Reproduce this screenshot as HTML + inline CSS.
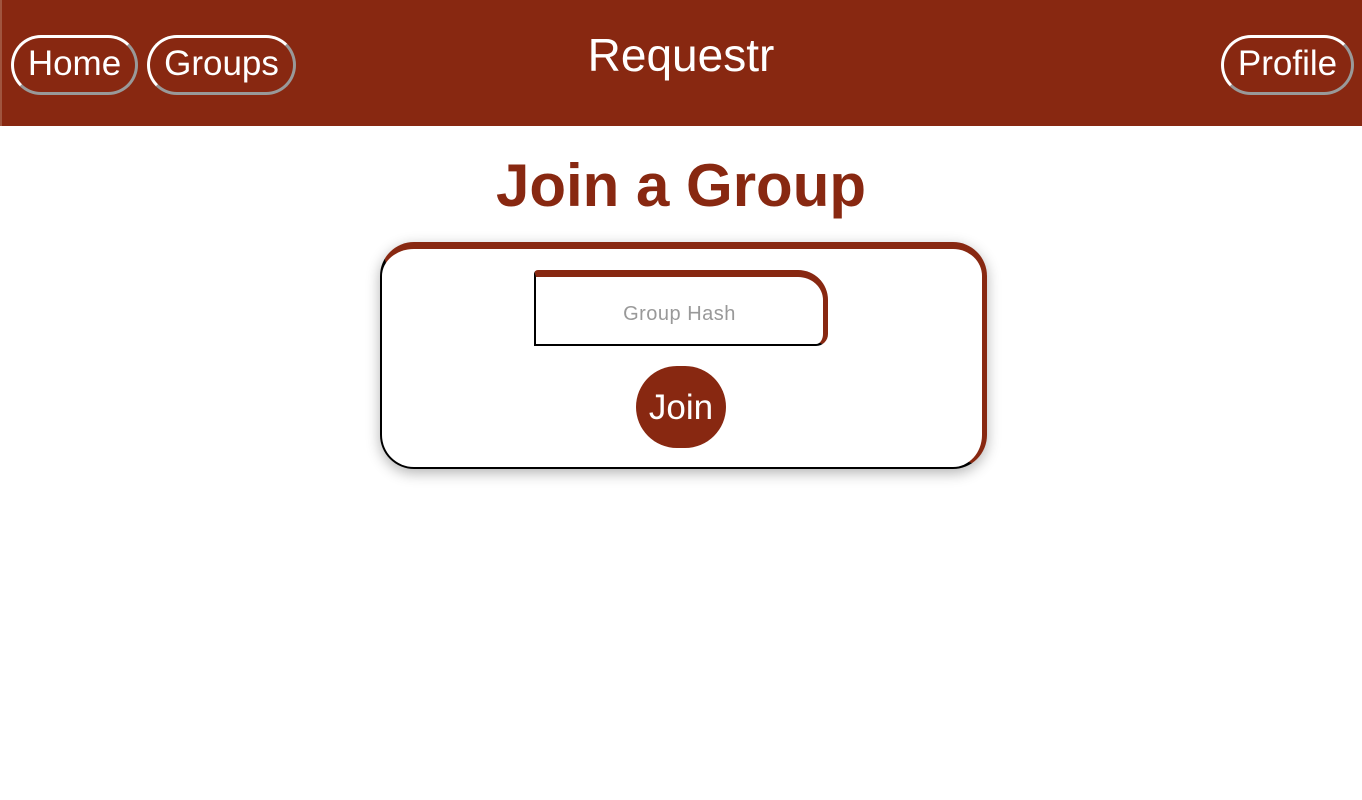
<!DOCTYPE html>
<html><head><style>
*{margin:0;padding:0;box-sizing:border-box}
body{width:1362px;height:800px;background:#fff;font-family:"Liberation Sans",Arial,sans-serif;position:relative;overflow:hidden}
.hdr{position:absolute;left:0;top:0;width:1362px;height:126px;background:#882811;border-left:2px solid #a0553f}
.nb{position:absolute;top:35px;height:60px;border:3px solid;border-color:#fff #999 #999 #fff;border-radius:30px;color:#fff;font-size:35px;line-height:52px;text-align:center}
.title{position:absolute;top:28px;left:0;width:1362px;text-align:center;color:#fff;font-size:46px}
h1{position:absolute;top:151px;left:0;width:1362px;text-align:center;color:#882811;font-size:60px;font-weight:bold}
.card{position:absolute;left:380px;top:242px;width:607px;height:227px;border-style:solid;border-width:7px 5px 2px 2px;border-color:#882811 #882811 #000 #000;border-radius:34px;box-shadow:0 4px 14px rgba(0,0,0,.3)}
.inp{position:absolute;left:534px;top:270px;width:294px;height:76px;border-style:solid;border-width:7px 5px 2px 2px;border-color:#882811 #882811 #000 #000;border-radius:4px 30px 12px 0;color:#999;font-size:20px;text-align:center;line-height:74px;letter-spacing:.5px}
.join{position:absolute;left:636px;top:366px;width:90px;height:82px;border-radius:41px;background:#882811;color:#fff;font-size:35px;text-align:center;line-height:84px}
</style></head><body>
<div class="hdr"></div>
<div class="nb" style="left:11px;width:127px">Home</div>
<div class="nb" style="left:147px;width:149px">Groups</div>
<div class="nb" style="left:1221px;width:133px">Profile</div>
<div class="title">Requestr</div>
<h1>Join a Group</h1>
<div class="card"></div>
<div class="inp">Group Hash</div>
<div class="join">Join</div>
</body></html>
